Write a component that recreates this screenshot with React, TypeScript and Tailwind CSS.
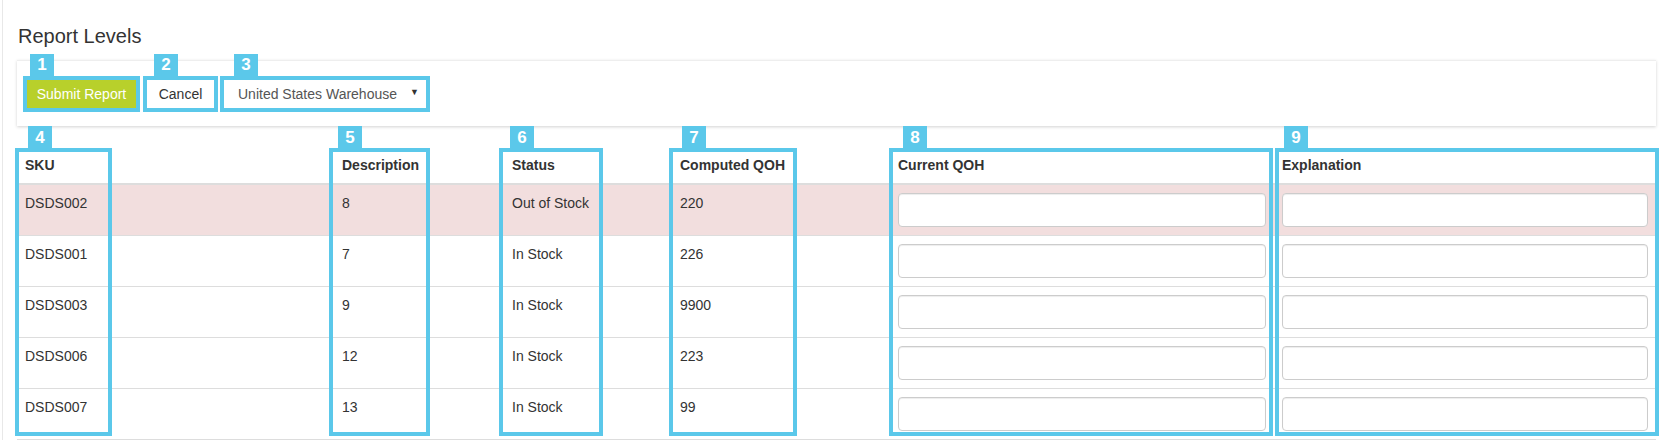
import { ChangeEvent, useState } from "react";

const ROWS = [
  { sku: "DSDS002", desc: "8", status: "Out of Stock", qoh: "220", danger: true },
  { sku: "DSDS001", desc: "7", status: "In Stock", qoh: "226", danger: false },
  { sku: "DSDS003", desc: "9", status: "In Stock", qoh: "9900", danger: false },
  { sku: "DSDS006", desc: "12", status: "In Stock", qoh: "223", danger: false },
  { sku: "DSDS007", desc: "13", status: "In Stock", qoh: "99", danger: false },
];

// annotation frames laid over the table columns (left / width relative to table)
const COLUMN_MARKS = [
  { n: "4", left: -2, width: 97, badge: 9 },
  { n: "5", left: 312, width: 101, badge: 5 },
  { n: "6", left: 482, width: 104, badge: 7 },
  { n: "7", left: 652, width: 128, badge: 9 },
  { n: "8", left: 872, width: 384, badge: 10 },
  { n: "9", left: 1258, width: 384, badge: 5 },
];

function Badge({ n, left }: { n: string; left: number }) {
  return (
    <span
      className="absolute top-[-26px] flex h-[22px] w-[24px] items-center justify-center bg-[#5bc8ea] text-[17px] font-bold leading-none text-white"
      style={{ left }}
    >
      {n}
    </span>
  );
}

export default function App() {
  const [values, setValues] = useState<Record<string, string>>({});
  const [warehouse, setWarehouse] = useState("United States Warehouse");

  const update = (key: string) => (e: ChangeEvent<HTMLInputElement>) =>
    setValues((v) => ({ ...v, [key]: e.target.value }));

  return (
    <div className="h-[440px] w-[1668px] overflow-hidden bg-white pl-[2px] font-['Liberation_Sans',Arial,sans-serif] text-[14px] leading-[20px] text-[#333]">
      <div className="h-full border-l border-[#e8e8e8]">
        {/* Title */}
        <h3 className="pl-[15px] pt-[25px] text-[20px] leading-[22px] font-normal text-[#333]">
          Report Levels
        </h3>

        {/* Toolbar panel */}
        <div className="ml-[14px] mt-[13px] flex h-[66px] w-[1639px] items-center border-t border-[#eee] bg-white pl-[6px] shadow-[0_1px_3px_rgba(0,0,0,0.18)]">
          <div className="relative border-4 border-[#5bc8ea]">
            <Badge n="1" left={3} />
            <button className="block h-[28px] w-[109px] bg-[#b8d02b] text-[14px] text-white">
              Submit Report
            </button>
          </div>
          <div className="relative ml-[3px] border-4 border-[#5bc8ea]">
            <Badge n="2" left={7} />
            <button className="block h-[28px] w-[67px] bg-white text-[14px] text-[#333]">
              Cancel
            </button>
          </div>
          <div className="relative ml-[2px] border-4 border-[#5bc8ea]">
            <Badge n="3" left={10} />
            <div className="relative h-[28px] w-[202px] bg-white">
              <select
                value={warehouse}
                onChange={(e) => setWarehouse(e.target.value)}
                className="h-full w-full appearance-none bg-transparent pl-[14px] text-[14px] text-[#555] outline-none"
              >
                <option>United States Warehouse</option>
                <option>Canada Warehouse</option>
              </select>
              <span className="pointer-events-none absolute right-[7px] top-[8px] text-[9px] leading-none text-[#333]">
                ▼
              </span>
            </div>
          </div>
        </div>

        {/* Table */}
        <div className="relative ml-[14px] mt-[21px] w-[1639px]">
          <table className="w-[1639px] table-fixed border-separate border-spacing-0">
            <colgroup>
              <col className="w-[317px]" />
              <col className="w-[170px]" />
              <col className="w-[168px]" />
              <col className="w-[218px]" />
              <col className="w-[384px]" />
              <col className="w-[382px]" />
            </colgroup>
            <thead>
              <tr>
                {["SKU", "Description", "Status", "Computed QOH", "Current QOH", "Explanation"].map((h) => (
                  <th
                    key={h}
                    className="border-b-2 border-[#ddd] p-2 text-left align-bottom font-bold text-[#333]"
                  >
                    {h}
                  </th>
                ))}
              </tr>
            </thead>
            <tbody>
              {ROWS.map((r, i) => {
                const td =
                  "p-2 align-top " +
                  (i > 0 ? "border-t border-[#ddd] " : "") +
                  (i === ROWS.length - 1 ? "border-b border-[#ddd] " : "") +
                  (r.danger ? "bg-[#f2dede]" : "bg-white");
                return (
                  <tr key={r.sku}>
                    <td className={td}>{r.sku}</td>
                    <td className={td}>{r.desc}</td>
                    <td className={td}>{r.status}</td>
                    <td className={td}>{r.qoh}</td>
                    <td className={td}>
                      <input
                        value={values[r.sku + "-qoh"] ?? ""}
                        onChange={update(r.sku + "-qoh")}
                        className="block h-[34px] w-full rounded-[4px] border border-[#ccc] bg-white px-3 shadow-[inset_0_1px_1px_rgba(0,0,0,0.075)] outline-none"
                      />
                    </td>
                    <td className={td}>
                      <input
                        value={values[r.sku + "-exp"] ?? ""}
                        onChange={update(r.sku + "-exp")}
                        className="block h-[34px] w-full rounded-[4px] border border-[#ccc] bg-white px-3 shadow-[inset_0_1px_1px_rgba(0,0,0,0.075)] outline-none"
                      />
                    </td>
                  </tr>
                );
              })}
            </tbody>
          </table>

          {/* Column annotations */}
          {COLUMN_MARKS.map((m) => (
            <div
              key={m.n}
              className="pointer-events-none absolute top-[1px] h-[288px] border-4 border-[#5bc8ea]"
              style={{ left: m.left, width: m.width }}
            >
              <Badge n={m.n} left={m.badge} />
            </div>
          ))}
        </div>
      </div>
    </div>
  );
}
